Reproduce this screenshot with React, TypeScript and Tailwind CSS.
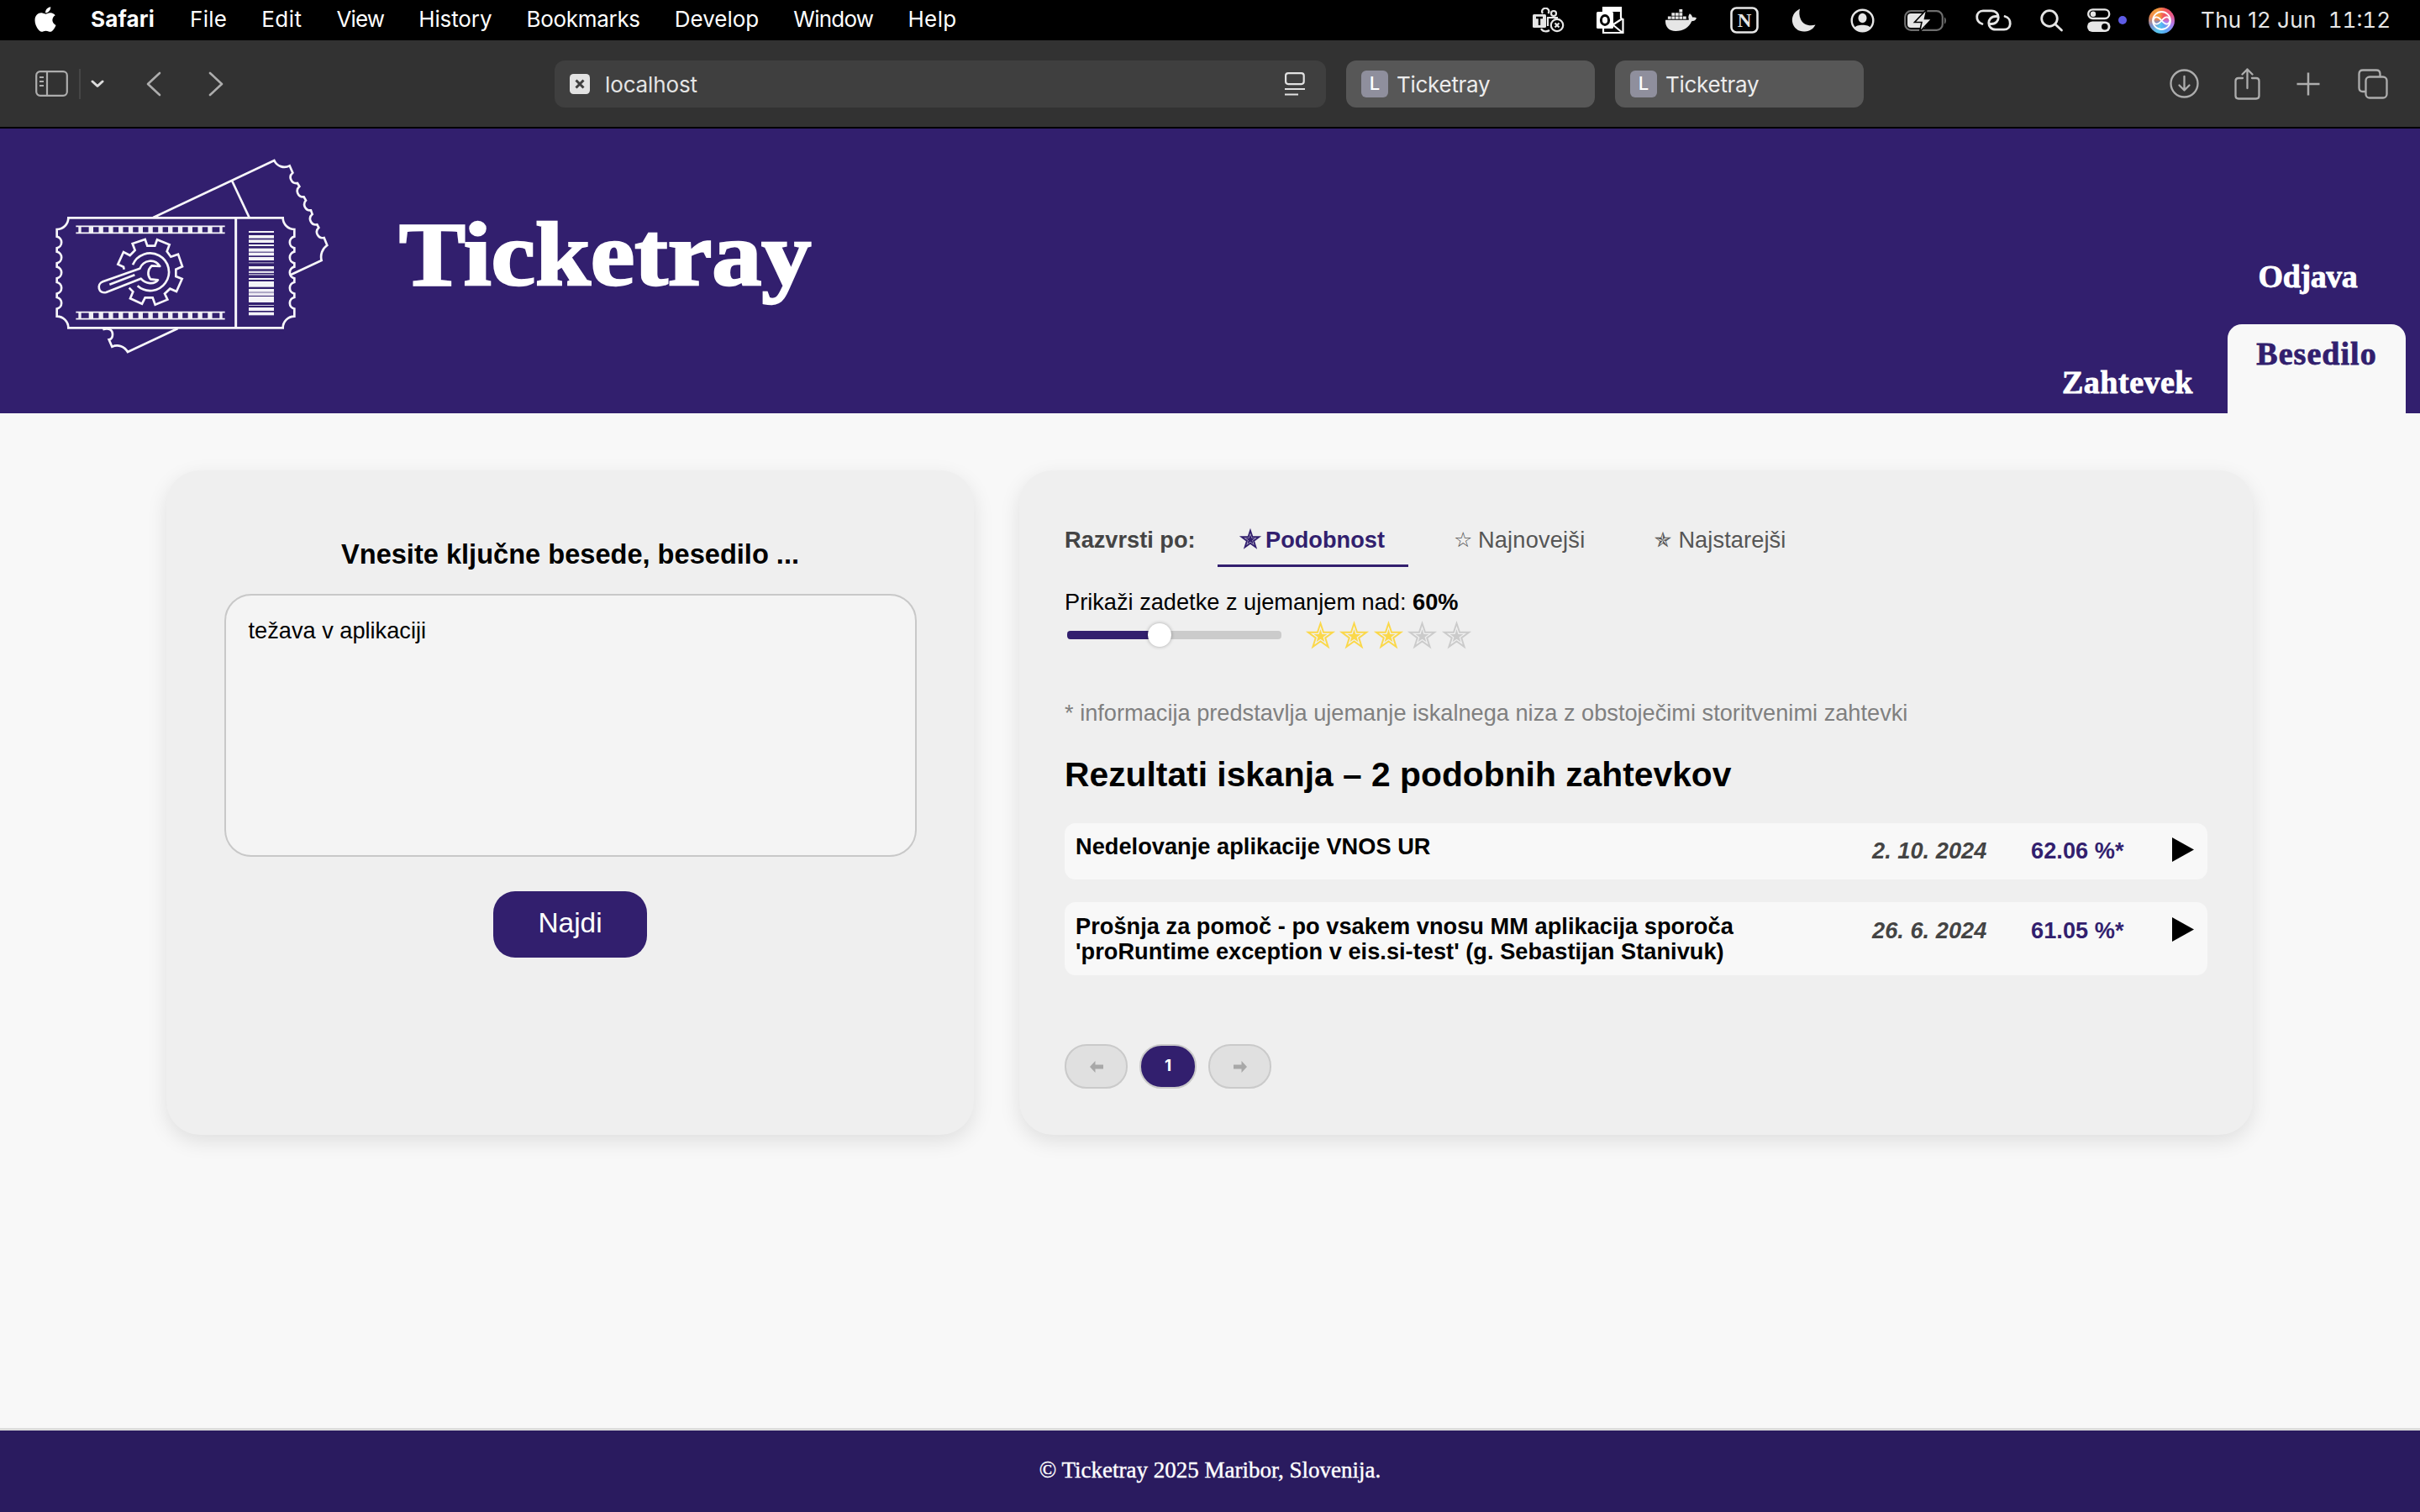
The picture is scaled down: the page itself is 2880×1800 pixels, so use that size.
import React from "react";
import { FaApple, FaDocker } from "react-icons/fa";

const SANS = "font-['Liberation_Sans',Arial,sans-serif]";
const UI = "font-['Inter',sans-serif]";
const SERIF = "font-['Liberation_Serif',Georgia,serif]";

const scallopsDown = [365, 419, 473, 528, 582];

function Logo() {
  const right = scallopsDown.map((y) => `L934 ${y} A21 21 0 0 0 934 ${y + 41}`).join(" ");
  const left = [...scallopsDown].reverse().map((y) => `L86 ${y + 41} A21 21 0 0 0 86 ${y}`).join(" ");
  const bars = Array.from({ length: 13 }, (_, i) => 200 + i * 35.4);
  const code: [number, number, number][] = [
    [345, 6, 1], [360, 11, 1], [376, 11, 1], [393, 6, 1], [407, 12, 1], [422, 11, 1], [438, 12, 1], [457, 3, 0.7],
    [471, 10, 1], [488, 7, 0.9], [498, 5, 0.6], [513, 6, 1], [525, 20, 1], [552, 11, 1], [565, 11, 0.95], [579, 21, 1],
    [609, 3, 0.8], [618, 12, 1], [635, 11, 1],
  ];
  return (
    <svg viewBox="0 0 1200 840" className="h-[280px] w-[400px]" fill="none" stroke="#f7f6fa" strokeWidth="8">
      <path d="M430 297 L862 93 A40 40 0 0 0 917 112 L928 137 A21 21 0 0 0 945 174 L952 186 A21 21 0 0 0 968 223 L975 236 A21 21 0 0 0 993 271 L998 285 A21 21 0 0 0 1015 322 L1021 333 A21 21 0 0 0 1040 369 L1051 396 A50 50 0 0 0 1031 450 L917 503" />
      <path d="M711 165 L773 297" />
      <path d="M250 697 C270 690 285 697 285 714 C285 726 279 732 272 733 L283 758 C305 748 328 758 339 777 L518 693" />
      <path d={`M127 298 L893 298 A41 41 0 0 0 934 339 ${right} L934 650 A41 41 0 0 0 893 691 L127 691 A41 41 0 0 0 86 650 ${left} L86 339 A41 41 0 0 0 127 298 Z`} />
      <path d="M725 298 V691" strokeWidth="9" />
      {[328, 635].map((y) => (
        <g key={y}>
          <path d={`M154 ${y} H686 M154 ${y + 24} H686`} strokeWidth="5" />
          <g stroke="none" fill="#f0eff5">
            <rect x="163" y={y} width="10" height="24" />
            {bars.map((x) => (
              <rect key={x} x={x} y={y} width="16" height="24" />
            ))}
            <rect x="667" y={y} width="10" height="24" />
          </g>
        </g>
      ))}
      <path d="M326 482 L324 473 L304 464 L324 420 L347 432 L365 414 L356 390 L401 375 L409 398 L436 398 L444 376 L488 394 L479 418 L493 437 L519 428 L534 472 L511 482 L511 507 L533 516 L513 561 L490 551 L471 569 L481 590 L437 608 L428 583 L401 583 L390 605 L348 586 L358 562 L344 548" />
      <path d="M357 466 A67 67 0 1 1 374 541" />
      <path d="M382 479 C396 446 436 443 454 471 L425 469 C409 484 409 504 420 517 L447 520 C434 538 402 534 386 515 L262 564 C234 570 227 535 250 526 Z" strokeLinejoin="round" />
      <path d="M274 536 L364 502" />
      <g stroke="none" fill="#f4f3f8">
        {code.map(([y, h, o]) => (
          <rect key={y} x="771" y={y} width="90" height={h} opacity={o} />
        ))}
      </g>
    </svg>
  );
}

function MenuBar() {
  const items: [string, string][] = [
    ["File", "tracking-[0.25px]"],
    ["Edit", "tracking-[0.5px]"],
    ["View", "tracking-[-0.9px]"],
    ["History", "tracking-[-0.1px]"],
    ["Bookmarks", "tracking-[-0.3px]"],
    ["Develop", "tracking-[0px]"],
    ["Window", "tracking-[-0.75px]"],
    ["Help", "tracking-[0.4px]"],
  ];
  return (
    <div className={`flex h-12 items-center bg-black text-[26px] leading-[46px] text-white ${UI}`}>
      <div className="flex w-[1824px] items-center pb-0.5 pl-[40px]">
        <FaApple className="h-[34px] w-[28px]" />
        <span className="ml-[40px] font-bold tracking-[0.2px]">Safari</span>
        <div className="ml-[42px] flex gap-[41px]">
          {items.map(([t, c]) => (
            <span key={t} className={c}>{t}</span>
          ))}
        </div>
      </div>
      <svg className="h-[30px] w-[38px]" viewBox="0 0 38 30" fill="none" stroke="#e6e6e6" strokeWidth="2.2">
        <rect x="0" y="8" width="16" height="16" rx="1.5" fill="#e6e6e6" stroke="none" />
        <path d="M4 12 H12 M8 12 V21" stroke="#000" strokeWidth="2.4" />
        <path d="M12 7 A4 4 0 1 1 18.500 7" />
        <circle cx="25" cy="7" r="3" />
        <path d="M17 12 H29 V13 M10 25 C12 29 17 29 20 27 M18 12 V22" />
        <circle cx="29" cy="21" r="7.2" />
        <path d="M26.5 18.5 L31.5 23.5 M31.5 18.5 L26.5 23.5" />
      </svg>
      <svg className="ml-[38px] h-8 w-[34px]" viewBox="0 0 34 32" fill="none" stroke="#fff" strokeWidth="2.2">
        <path d="M8 7 V1.2 H29 V14 M31.5 14 V31 H8 V25 M14 25 L31 14 M20 22 L31 31" />
        <path d="M8 4 H29" strokeWidth="4" />
        <rect x="0" y="6" width="20" height="20" rx="1.5" fill="#fff" stroke="none" />
        <ellipse cx="10" cy="16" rx="4.6" ry="5.4" stroke="#000" strokeWidth="3" />
      </svg>
      <FaDocker className="ml-[48px] h-[36px] w-[37px] text-[#e6e6e6]" />
      <svg className="ml-[40px] h-8 w-[34px]" viewBox="0 0 34 32">
        <rect x="1.5" y="1.5" width="31" height="29" rx="6" fill="none" stroke="#e6e6e6" strokeWidth="2.6" />
        <text x="17" y="24" textAnchor="middle" fontSize="23" fontWeight="700" fill="#e6e6e6" className={SERIF}>N</text>
      </svg>
      <svg className="ml-[39px] h-7 w-[29px]" viewBox="0 0 29 28" fill="#e6e6e6">
        <path d="M10 0.5 C3 4 0 10 1 16 C2.500 24 9 28 16 27.500 C22 27 26.500 24 28.500 19.500 C21 21.500 14 19.500 11 13 C9 8.500 9 4.500 10 0.500 Z" />
      </svg>
      <svg className="ml-[41px] h-[29px] w-[29px]" viewBox="0 0 29 29" fill="none" stroke="#e6e6e6" strokeWidth="2.4">
        <circle cx="14.500" cy="14.500" r="12.800" />
        <g fill="#e6e6e6" stroke="none">
          <ellipse cx="14.500" cy="11.500" rx="5" ry="5.800" />
          <path d="M5 23 C7 18.500 22 18.500 24 23 C20 28 9 28 5 23 Z" />
        </g>
      </svg>
      <svg className="ml-[35px] h-[25px] w-[51px]" viewBox="0 0 51 25" fill="none">
        <rect x="1.200" y="1.200" width="44.600" height="22.600" rx="7" stroke="#6e6e6e" strokeWidth="2.200" />
        <path d="M48 8.500 C50.500 9.500 50.500 15.500 48 16.500 Z" fill="#6e6e6e" />
        <path d="M8 4 H25 V21 H8 Q4 21 4 17 V8 Q4 4 8 4 Z" fill="#e6e6e6" />
        <path d="M27 -1 L12.500 14.500 H21 L18.500 26 L33 10.500 H24.500 Z" fill="#e6e6e6" stroke="#000" strokeWidth="1.600" />
      </svg>
      <svg className="ml-[34px] h-[26px] w-[43px]" viewBox="0 0 43 26" fill="none" stroke="#e6e6e6" strokeWidth="2.800" strokeLinecap="round">
        <path d="M8 17.500 C-1 15 0 1.800 9 1.800 H19 C30 1.800 30 17.500 19 17.500 H17.500" />
        <path d="M35 8.500 C44 11 43 24.200 34 24.200 H24 C13 24.200 13 8.500 24 8.500 H25.500" />
      </svg>
      <svg className="ml-[34px] h-[27px] w-[28px]" viewBox="0 0 28 27" fill="none" stroke="#e6e6e6" strokeWidth="2.800" strokeLinecap="round">
        <circle cx="11" cy="11" r="9.300" />
        <path d="M18 18 L25.500 25" />
      </svg>
      <svg className="ml-[28px] h-[28px] w-[28px]" viewBox="0 0 28 28" fill="none" stroke="#e6e6e6" strokeWidth="2.400">
        <rect x="1.200" y="1.400" width="25" height="10.600" rx="5.300" />
        <circle cx="7" cy="6.700" r="3.200" fill="#e6e6e6" stroke="none" />
        <rect x="0" y="15.500" width="27.500" height="12.500" rx="6.200" fill="#e6e6e6" stroke="none" />
        <circle cx="20.800" cy="21.700" r="3.800" fill="#000" stroke="none" />
      </svg>
      <span className="ml-[9px] size-[10px] rounded-full bg-[#5e5ce6]" />
      <span className="ml-[26px] flex size-[31px] items-center justify-center rounded-full bg-[conic-gradient(from_20deg,#f2545b,#e85a8c,#b07cf0,#5aa5f5,#58c8f0,#7a8cc8,#f08a4b,#f2a03c,#f2545b)]">
        <svg className="size-[25px]" viewBox="0 0 25 25" fill="none" stroke="#fff" strokeWidth="1.800">
          <circle cx="12.500" cy="12.500" r="10.500" />
          <path d="M2.500 12.500 C4 7 8 7 12.500 12.500 C17 18 21 18 22.500 12.500 C21 7 17 7 12.500 12.500 C8 18 4 18 2.500 12.500" />
        </svg>
      </span>
      <span className="ml-[31px] tracking-[0.35px] text-[#e6e6e6]">Thu 12 Jun</span>
      <span className="ml-[14px] tabular-nums text-[#e6e6e6]">11:12</span>
    </div>
  );
}

function Tab() {
  return (
    <div className="ml-6 flex h-14 w-[296px] items-center rounded-xl bg-[#575757] pl-[18px] text-[#ececec]">
      <span className="flex size-8 items-center justify-center rounded-md bg-[#8f8f9d] text-[22px] font-medium text-white">L</span>
      <span className="ml-[10px] pt-[2px] tracking-[-0.28px]">Ticketray</span>
    </div>
  );
}

function Toolbar() {
  return (
    <div className={`flex h-[105px] items-center border-b-2 border-black bg-[#323232] text-[26px] ${UI}`}>
      <svg className="ml-[42px] h-[31px] w-[39px]" viewBox="0 0 39 31" fill="none" stroke="#adadad" strokeWidth="2.200">
        <rect x="1.200" y="1.200" width="36.600" height="28.600" rx="4.500" />
        <path d="M14 1 V30 M5 8 H10 M5 13 H10 M5 18 H10" />
      </svg>
      <span className="ml-[13px] h-9 w-[2px] bg-[#464646]" />
      <svg className="ml-[12px] h-[10px] w-[16px]" viewBox="0 0 16 10" fill="none" stroke="#dcdcdc" strokeWidth="3" strokeLinecap="round" strokeLinejoin="round">
        <path d="M2 2 L8 7.500 L14 2" />
      </svg>
      <svg className="ml-[50px] h-[30px] w-[18px]" viewBox="0 0 18 30" fill="none" stroke="#adadad" strokeWidth="2.600" strokeLinecap="round" strokeLinejoin="round">
        <path d="M16 2 L2 15 L16 28" />
      </svg>
      <svg className="ml-[56px] h-[30px] w-[18px]" viewBox="0 0 18 30" fill="none" stroke="#adadad" strokeWidth="2.600" strokeLinecap="round" strokeLinejoin="round">
        <path d="M2 2 L16 15 L2 28" />
      </svg>
      <div className="ml-[394px] flex h-14 w-[918px] items-center rounded-xl bg-[#3f3f3f] pl-[18px] text-[#e4e4e4]">
        <svg className="size-6" viewBox="0 0 24 24">
          <rect width="24" height="24" rx="4.500" fill="#e2e2e2" />
          <path d="M7.500 7.500 L16.500 16.500 M16.500 7.500 L7.500 16.500" stroke="#3f3f3f" strokeWidth="3" />
        </svg>
        <span className="ml-[18px] pt-[2px] tracking-[-0.13px]">localhost</span>
        <svg className="ml-auto mr-[25px] h-[28px] w-[24px]" viewBox="0 0 24 28" fill="none" stroke="#e2e2e2" strokeWidth="2.200">
          <rect x="1.100" y="1.100" width="21.600" height="13" rx="3" />
          <path d="M0 20 H24 M0 26.500 H16" />
        </svg>
      </div>
      <Tab />
      <Tab />
      <svg className="ml-[364px] size-[35px]" viewBox="0 0 35 35" fill="none" stroke="#adadad" strokeWidth="2.300" strokeLinecap="round" strokeLinejoin="round">
        <circle cx="17.500" cy="17.500" r="16" />
        <path d="M17.500 9 V25 M11.500 19.500 L17.500 25.500 L23.500 19.500" />
      </svg>
      <svg className="ml-[42px] h-[38px] w-[31px]" viewBox="0 0 31 38" fill="none" stroke="#adadad" strokeWidth="2.300" strokeLinecap="round" strokeLinejoin="round">
        <path d="M10 12 H5 Q1.500 12 1.500 15.500 V33 Q1.500 36.500 5 36.500 H26 Q29.500 36.500 29.500 33 V15.500 Q29.500 12 26 12 H21 M15.500 24 V1.500 M9.500 7.500 L15.500 1.500 L21.500 7.500" />
      </svg>
      <svg className="ml-[43px] size-[28px]" viewBox="0 0 28 28" stroke="#adadad" strokeWidth="2.500">
        <path d="M14 0.500 V27.500 M0.500 14 H27.500" />
      </svg>
      <svg className="ml-[45px] size-[36px]" viewBox="0 0 36 36" fill="none" stroke="#adadad" strokeWidth="2.300">
        <rect x="9.500" y="9.500" width="25" height="25" rx="4.500" />
        <path d="M9.500 27 H6 Q1.500 27 1.500 22.500 V6 Q1.500 1.500 6 1.500 H22 Q26.500 1.500 26.500 6 V9.500" />
      </svg>
    </div>
  );
}

function Header() {
  return (
    <header className={`flex h-[339px] bg-[#321f6e] pl-[39px] text-white ${SERIF}`}>
      <div className="mt-[7px] h-[280px] w-[400px]">
        <Logo />
      </div>
      <h1 className="ml-[36px] mt-[90px] w-[500px] origin-left scale-x-[1.105] whitespace-nowrap text-[107px] font-bold leading-[120px] [-webkit-text-stroke:2.5px_white]">Ticketray</h1>
      <nav className="ml-auto mr-[17px] flex items-end text-[38px] font-bold leading-[44px] [-webkit-text-stroke:0.8px_currentColor]">
        <span className="mb-[15px] mr-[41px] tracking-[0.5px]">Zahtevek</span>
        <div className="flex flex-col items-center">
          <span className="mb-[35px] mr-[21px] tracking-[-0.4px]">Odjava</span>
          <div className="flex h-[106px] w-[212px] justify-center rounded-t-[17px] bg-[#f8f8f8] pt-[13px] text-[#321f6e]">
            <span className="tracking-[1.05px]">Besedilo</span>
          </div>
        </div>
      </nav>
    </header>
  );
}

function SearchCard() {
  return (
    <section className="flex h-[791px] w-[961px] flex-col items-center rounded-[40px] bg-[#efefef] shadow-[0_8px_24px_rgba(0,0,0,0.1)]">
      <h2 className="mt-[80px] text-[32.6px] font-bold leading-[40px]">Vnesite ključne besede, besedilo ...</h2>
      <div className="mt-[27px] h-[313px] w-[824px] rounded-[32px] border-2 border-[#c8c8c8] bg-[#f4f4f4] px-[27px] pt-[24px] text-[27.2px] leading-[36px]">težava v aplikaciji</div>
      <button className="mt-[41px] h-[79px] w-[183px] rounded-[26px] bg-[#321f6e] pb-[3px] text-[33.4px] text-white">Najdi</button>
    </section>
  );
}

const STAR = "M16 1 L19.700 12.100 L31.200 12.100 L21.900 19 L25.400 30 L16 23.200 L6.600 30 L10.100 19 L0.800 12.100 L12.300 12.100 Z";

function Star({ className, weight, core }: { className: string; weight: number; core: number }) {
  return (
    <svg viewBox="0 0 32 31" strokeWidth={weight} className={`overflow-visible ${className}`}>
      <path d={STAR} fill="none" />
      <path d={STAR} stroke="none" transform={`translate(16 17) scale(${core}) translate(-16 -17)`} />
    </svg>
  );
}

function Sort({ star, label, active, track }: { star?: string; label: string; active?: boolean; track: string }) {
  return (
    <div className={active ? "flex h-[61px] items-center border-b-[3px] border-[#321f6e] px-7 font-bold text-[#321f6e]" : "flex h-[61px] items-center border-b-[3px] border-transparent px-7 text-[#555]"}>
      <span className="flex w-[29px] font-['DejaVu_Sans',sans-serif] text-[25px] font-normal">
        {star ?? <Star className="mb-[3px] h-[21px] w-[22px] fill-[#321f6e] stroke-[#321f6e]" weight={2.8} core={0.6} />}
      </span>
      <span className={track}>{label}</span>
    </div>
  );
}

function Row({ lines, date, pct, pad }: { lines: string[]; date: string; pct: string; pad: string }) {
  return (
    <div className={`flex w-[1360px] rounded-[13px] bg-[#f8f8f8] pl-[13px] font-bold tracking-[0.03px] ${pad}`}>
      <div className="w-[946px] leading-[30px]">
        {lines.map((l) => (
          <div key={l}>{l}</div>
        ))}
      </div>
      <span className="mt-[5px] h-[37px] w-[191px] pl-[2px] italic leading-[30px] text-[#444]">{date}</span>
      <span className="mt-[5px] w-[168px] leading-[30px] text-[#321f6e]">{pct}</span>
      <svg className="mt-[4px] h-[29px] w-[26px]" viewBox="0 0 26 29"><path d="M0 0 L26 14.500 L0 29 Z" /></svg>
    </div>
  );
}

function ResultsCard() {
  return (
    <section className="h-[791px] w-[1468px] rounded-[40px] bg-[#efefef] pl-[54px] text-[27.2px] shadow-[0_8px_24px_rgba(0,0,0,0.1)]">
      <div className="flex h-[115px] items-end">
        <span className="mb-[14px] w-[155px] whitespace-nowrap font-bold leading-[36px] text-[#444]">Razvrsti po:</span>
        <div className="ml-[27px] flex gap-[26px]">
          <Sort label="Podobnost" active track="tracking-[0px]" />
          <Sort star="☆" label="Najnovejši" track="tracking-[0.2px]" />
          <Sort star="✯" label="Najstarejši" track="tracking-[0.1px]" />
        </div>
      </div>
      <p className="mt-[24px] leading-[36px]">Prikaži zadetke z ujemanjem nad: <b>60%</b></p>
      <div className="mt-[3px] flex h-[35px] items-center">
        <div className="ml-[3px] flex h-[10px] w-[255px] items-center rounded-[4px] bg-[#cbcbcb]">
          <div className="h-[10px] w-[104px] rounded-l-[4px] bg-[#321f6e]" />
          <div className="-ml-2 size-[28px] rounded-full bg-white shadow-[0_0_4px_rgba(0,0,0,0.3)]" />
        </div>
        <div className="ml-[31px] flex gap-[9.4px]">
          {[1, 2, 3, 4, 5].map((n) => (
            <Star
              key={n}
              weight={2}
              core={0.54}
              className={n <= 3 ? "h-[30px] w-[31px] fill-[#fbd84a] stroke-[#fbd84a]" : "h-[30px] w-[31px] fill-[#cbcbcb] stroke-[#cbcbcb]"}
            />
          ))}
        </div>
      </div>
      <p className="mt-[58px] leading-[36px] text-[#808080]">* informacija predstavlja ujemanje iskalnega niza z obstoječimi storitvenimi zahtevki</p>
      <h2 className="mt-[30px] text-[40.8px] font-bold leading-[50px]">Rezultati iskanja – 2 podobnih zahtevkov</h2>
      <div className="mt-[33px] flex flex-col gap-[27px]">
        <Row lines={["Nedelovanje aplikacije VNOS UR"]} date="2. 10. 2024" pct="62.06 %*" pad="pt-[13px] pb-[12px]" />
        <Row
          lines={["Prošnja za pomoč - po vsakem vnosu MM aplikacija sporoča", "'proRuntime exception v eis.si-test' (g. Sebastijan Stanivuk)"]}
          date="26. 6. 2024"
          pct="61.05 %*"
          pad="pt-[14px] pb-[13px]"
        />
      </div>
      <div className={`mt-[82px] flex items-center text-[19px] font-bold ${UI}`}>
        <button className="flex h-[53px] w-[75px] items-center justify-center rounded-[26px] border-2 border-[#cacaca] bg-[#e0e0e0]">
          <svg className="h-[14px] w-4" viewBox="0 0 16 14" fill="#a8a8a8"><path d="M0 7 L6.500 0 V4.500 H16 V9.500 H6.500 V14 Z" /></svg>
        </button>
        <button className="ml-[14px] h-[53px] w-[68px] rounded-[26px] border-2 border-[#cacaca] bg-[#321f6e] text-white">1</button>
        <button className="ml-[14px] flex h-[53px] w-[75px] items-center justify-center rounded-[26px] border-2 border-[#cacaca] bg-[#e0e0e0]">
          <svg className="h-[14px] w-4" viewBox="0 0 16 14" fill="#a8a8a8"><path d="M16 7 L9.500 0 V4.500 H0 V9.500 H9.500 V14 Z" /></svg>
        </button>
      </div>
    </section>
  );
}

export default function App() {
  return (
    <div className="flex h-[1800px] w-[2880px] flex-col overflow-hidden bg-[#f8f8f8] text-black">
      <MenuBar />
      <Toolbar />
      <Header />
      <main className={`flex flex-1 pl-[198px] pt-[68px] ${SANS}`}>
        <SearchCard />
        <div className="ml-[54px]"><ResultsCard /></div>
      </main>
      <footer className={`h-[100px] border-t-[3px] border-[#dcdcdc] bg-[#2a1b5f] pt-[29px] text-center text-[27px] leading-[36px] text-white [-webkit-text-stroke:0.4px_white] ${SERIF}`}>
        © Ticketray 2025 Maribor, Slovenija.
      </footer>
    </div>
  );
}
